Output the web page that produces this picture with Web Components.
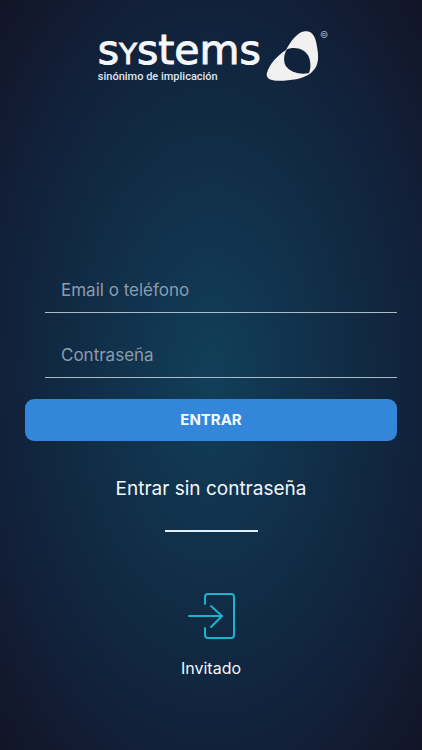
<!DOCTYPE html>
<html lang="es">
<head>
<meta charset="utf-8">
<meta name="viewport" content="width=device-width, initial-scale=1">
<title>Systems – Acceso</title>
<style>
html { height: 100%; }
body {
  margin: 0;
  min-height: 100%;
  font-family: Inter, "Liberation Sans", sans-serif;
  color: #f2f7fb;
  background: #121428;
}
</style>
</head>
<body>
<login-screen></login-screen>
<script>
const define = (name, html, setup) => customElements.define(name, class extends HTMLElement {
  connectedCallback() {
    if (this.shadowRoot) return;
    const template = document.createElement('template');
    template.innerHTML = html;
    this.attachShadow({ mode: 'open' }).append(template.content.cloneNode(true));
    if (setup) setup(this, this.shadowRoot);
  }
});

define('brand-logo', `
<style>
  :host { display: flex; justify-content: center; align-items: flex-start; color: #f4f6f8; }
  .words { display: flex; flex-direction: column; padding: 4px 0 0 4px; }
  .name { font: 41px/32px "DejaVu Sans", sans-serif; -webkit-text-stroke: 1px currentColor; }
  .name span { font-size: 29px; text-transform: uppercase; }
  .tag { font: 500 11px/14px Roboto, sans-serif; color: #dfe6ee; }
  svg { width: 54px; height: 52px; margin-left: 5px; fill: #f1f1f1; }
  sup { font: 9px/10px Inter, sans-serif; color: #aab3c0; }
</style>
<div class="words">
  <div class="name">s<span>y</span>stems</div>
  <div class="tag">sinónimo de implicación</div>
</div>
<svg viewBox="140 30 162 156" aria-hidden="true">
  <path fill-rule="evenodd" d="M256 34C279 31 289 50 293 80C300 118 297 142 272 161C250 176 215 182 180 182C155 182 138 176 143 158C150 134 172 108 200 90C214 66 231 38 256 34ZM203 88C226 78 255 86 266 106C275 122 275 145 269 159C244 165 212 157 199 137C191 123 194 100 203 88Z"/>
</svg>
<sup>©</sup>`);

define('line-field', `
<style>
  :host { display: grid; color: #8a9dae; font: 17px/24px Inter, sans-serif; }
  label, input { grid-area: 1 / 1; }
  label { align-self: center; padding: 0 16px; pointer-events: none; }
  input {
    box-sizing: border-box; width: 100%; height: 46px; margin: 0; padding: 0 16px;
    border: 0; border-bottom: 1px solid #a9bac8; border-radius: 0; outline: 0;
    background: transparent; color: #f2f7fb; font: inherit;
  }
  input:focus { border-color: #fff; }
  input:not(:placeholder-shown) + label { visibility: hidden; }
</style>
<input id="field" placeholder=" "><label for="field"></label>`, (host, root) => {
  root.querySelector('label').textContent = host.getAttribute('label');
  root.querySelector('input').type = host.getAttribute('type') || 'text';
});

define('primary-button', `
<style>
  :host { display: block; }
  button {
    display: block; width: 100%; height: 42px; padding: 0; border: 0; border-radius: 9px;
    background: #3486db; color: #f6faff; font: 700 15px/20px Inter, sans-serif; cursor: pointer;
  }
</style>
<button type="button"><slot></slot></button>`);

define('text-link', `
<style>
  :host { display: block; text-align: center; font: 19px/24px Inter, sans-serif; }
  a { color: inherit; text-decoration: none; }
</style>
<a href="#acceso"><slot></slot></a>`);

define('guest-entry', `
<style>
  :host { display: flex; justify-content: center; }
  a { display: flex; flex-direction: column; align-items: center; gap: 18px; color: inherit;
      text-decoration: none; font: 16px/20px Inter, sans-serif; }
  svg { width: 48px; height: 48px; fill: none; stroke: #1cb3cd; stroke-width: 2; stroke-linecap: round; stroke-linejoin: round; }
</style>
<a href="#invitado">
  <svg viewBox="0 0 48 48" aria-hidden="true">
    <path d="M18 12V5a3 3 0 0 1 3-3H44a3 3 0 0 1 3 3V43a3 3 0 0 1-3 3H21a3 3 0 0 1-3-3V36M2 24H35M24 14L35 24L24 35"/>
  </svg>
  <slot></slot>
</a>`);

define('login-screen', `
<style>
  :host {
    display: block; box-sizing: border-box; min-height: 100vh; padding: 30px 25px 40px;
    background: radial-gradient(ellipse at center, #113f59 0%, #11324c 30%, #11213a 70%, #121427 100%);
  }
  form { display: flex; flex-direction: column; margin-top: 183px; }
  .fields { display: flex; flex-direction: column; gap: 19px; padding-left: 20px; margin-bottom: 21px; }
  text-link { margin-top: 36px; }
  hr { width: 93px; height: 2px; margin: 29px auto 60px; border: 0; background: #e3edf5; }
</style>
<main>
  <brand-logo></brand-logo>
  <form>
    <div class="fields">
      <line-field label="Email o teléfono"></line-field>
      <line-field label="Contraseña" type="password"></line-field>
    </div>
    <primary-button>ENTRAR</primary-button>
  </form>
  <text-link>Entrar sin contraseña</text-link>
  <hr>
  <guest-entry>Invitado</guest-entry>
</main>`);
</script>
</body>
</html>
